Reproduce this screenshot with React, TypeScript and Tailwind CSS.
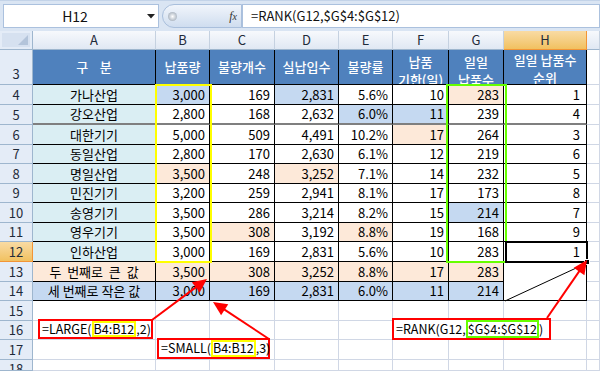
import React from 'react';

type Row = [number, string, string, string, string, string, string, string, string, string[]];

const FILL: Record<string, string> = {
  n: 'bg-white',
  b: 'bg-[#C5D9F1]',
  p: 'bg-[#FDE9D9]',
  a: 'bg-[#DAEEF3]',
};

const DATA: Row[] = [
  [4, '가나산업', '3,000', '169', '2,831', '5.6%', '10', '283', '1', ['b', 'n', 'b', 'n', 'n', 'p']],
  [5, '강오산업', '2,800', '168', '2,632', '6.0%', '11', '239', '4', ['n', 'n', 'n', 'b', 'b', 'n']],
  [6, '대한기기', '5,000', '509', '4,491', '10.2%', '17', '264', '3', ['n', 'n', 'n', 'n', 'p', 'n']],
  [7, '동일산업', '2,800', '170', '2,630', '6.1%', '12', '219', '6', ['n', 'n', 'n', 'n', 'n', 'n']],
  [8, '명일산업', '3,500', '248', '3,252', '7.1%', '14', '232', '5', ['p', 'n', 'p', 'n', 'n', 'n']],
  [9, '민진기기', '3,200', '259', '2,941', '8.1%', '17', '173', '8', ['n', 'n', 'n', 'n', 'n', 'n']],
  [10, '송영기기', '3,500', '286', '3,214', '8.2%', '15', '214', '7', ['n', 'n', 'n', 'n', 'n', 'b']],
  [11, '영우기기', '3,500', '308', '3,192', '8.8%', '19', '168', '9', ['n', 'p', 'n', 'p', 'n', 'n']],
  [12, '인하산업', '3,000', '169', '2,831', '5.6%', '10', '283', '1', ['n', 'n', 'n', 'n', 'n', 'n']],
];

const rowHeadBase = 'border-r border-b flex items-center justify-center text-[13px] text-[#1f2b3a] overflow-hidden';
const rowHeadNormal = 'bg-[#E4ECF7] border-[#9EB6CE]';
const rowHeadActive = 'bg-linear-to-b from-[#F9DBA3] to-[#F1C15F] border-[#F29536]';

function RowHead({ n, active = false, bottom = false, top = false }: { n: number; active?: boolean; bottom?: boolean; top?: boolean }) {
  return (
    <div className={`${rowHeadBase} ${active ? rowHeadActive : rowHeadNormal} ${bottom ? 'items-end pb-[1px]' : ''} ${top ? 'items-start pt-[1px] leading-[16px]' : ''}`}>
      {n}
    </div>
  );
}

function Grid() {
  return <div className="border-r border-b border-[#D0D7E5] bg-white" />;
}

function Arrow({ x1, y1, x2, y2 }: { x1: number; y1: number; x2: number; y2: number }) {
  const dx = x2 - x1;
  const dy = y2 - y1;
  const len = Math.hypot(dx, dy);
  const ux = dx / len;
  const uy = dy / len;
  const L = 14;
  const W = 6.5;
  const bx = x2 - ux * L;
  const by = y2 - uy * L;
  const nx = -uy;
  const ny = ux;
  const pts = `${x2},${y2} ${bx + nx * W},${by + ny * W} ${bx - nx * W},${by - ny * W}`;
  return (
    <g>
      <line x1={x1} y1={y1} x2={bx + ux * 2} y2={by + uy * 2} stroke="#FF0000" strokeWidth={2} />
      <polygon points={pts} fill="#FF0000" />
    </g>
  );
}

export default function App() {
  const F = "font-['Noto_Sans_CJK_KR','Noto_Sans',sans-serif]";
  const tbl = 'border-r border-b border-black flex items-center text-[13px] text-black overflow-hidden whitespace-nowrap';
  const hdr = 'bg-[#4F81BD] border-r border-b border-black flex justify-center text-[13px] text-white font-medium overflow-hidden whitespace-nowrap';
  const colHead = 'bg-linear-to-b from-[#F7F9FC] to-[#E0E8F3] border-r border-b border-r-[#C5D1E0] border-b-[#9EB6CE] flex items-center justify-center text-[13px] text-[#1f2b3a]';
  const colHeadActive = 'bg-linear-to-b from-[#F9DBA3] to-[#F1C15F] border-r border-b border-[#F29536] flex items-center justify-center text-[13px] text-[#1f2b3a]';

  return (
    <div className={`relative w-[600px] h-[371px] overflow-hidden bg-white ${F}`}>
      {/* formula bar */}
      <div className="h-[31px] bg-[#DAE5F3] flex pt-[3px] pl-[3px] pb-[3px] border-t border-[#C3D3E8]">
        <div className="w-[156px] h-[24px] bg-white border border-[#ABC1DE] flex items-center">
          <div className="flex-1 text-center text-[14px] text-[#111] pl-[2px]">H12</div>
          <div className="w-[14px] flex items-center justify-center">
            <svg width="8" height="5" viewBox="0 0 8 5"><polygon points="0,0 8,0 4,4.5" fill="#222" /></svg>
          </div>
        </div>
        <div className="ml-[3px] w-[80px] h-[24px] rounded-l-[12px] bg-linear-to-b from-[#F1F5FB] to-[#CFDDEF] border border-[#A9BFDC] flex items-center justify-between pl-[5px] pr-[4px]">
          <div className="w-[9px] h-[9px] rounded-full bg-radial from-[#FFFFFF] to-[#8E9BAA]" />
          <span className="text-[12px] italic font-['Liberation_Serif',serif] text-[#333]">f<span className="text-[10px]">x</span></span>
        </div>
        <div className="flex-1 h-[24px] bg-white border border-[#ABC1DE] flex items-center pl-[8px] text-[13px] text-[#111]">
          =RANK(G12,$G$4:$G$12)
        </div>
      </div>

      {/* sheet grid */}
      <div className="grid grid-cols-[33px_123px_54px_65px_64px_54px_56px_55px_83px_13px] grid-rows-[19px_35px_20px_20px_20px_19px_20px_19px_20px_19px_20px_20px_19px_20px_19px_20px_11px]">
        {/* column headers */}
        <div className="bg-[#E4ECF7] border-r border-b border-[#9EB6CE] p-[2px]">
          <div className="w-full h-full bg-[#D6E1F0] flex items-end justify-end p-[2px]">
            <svg width="10" height="10" viewBox="0 0 10 10"><polygon points="10,0 10,10 0,10" fill="#B3C4DA" /></svg>
          </div>
        </div>
        {['A', 'B', 'C', 'D', 'E', 'F', 'G'].map((c) => (
          <div key={c} className={colHead}>{c}</div>
        ))}
        <div className={colHeadActive}>H</div>
        <div className={colHead} />

        {/* row 3 header */}
        <RowHead n={3} bottom />
        <div className={`${hdr} items-center`}>구&nbsp;&nbsp;&nbsp;&nbsp;분</div>
        <div className={`${hdr} items-center`}>납품량</div>
        <div className={`${hdr} items-center`}>불량개수</div>
        <div className={`${hdr} items-center`}>실납입수</div>
        <div className={`${hdr} items-center`}>불량률</div>
        <div className={`${hdr} flex-col items-center justify-start pt-[3px] leading-[18px]`}><span>납품</span><span>기한(일)</span></div>
        <div className={`${hdr} flex-col items-center justify-start pt-[3px] leading-[18px]`}><span>일일</span><span>납품수</span></div>
        <div className={`${hdr} flex-col items-center justify-start pt-[1px] leading-[18px]`}><span>일일 납품수</span><span>순위</span></div>
        <Grid />

        {/* data rows */}
        {DATA.map((r) => {
          const [n, name, b, c, d, e, f, g, h, fills] = r;
          const thick = n === 5 ? 'border-b-2 border-b-[#7F7F7F]' : '';
          const vals = [b, c, d, e, f, g];
          return (
            <React.Fragment key={n}>
              <RowHead n={n} active={n === 12} />
              <div className={`${tbl} ${thick} bg-[#DAEEF3] justify-center`}>{name}</div>
              {vals.map((v, i) => (
                <div key={i} className={`${tbl} ${thick} ${FILL[fills[i]]} justify-end pr-[4px]`}>{v}</div>
              ))}
              <div className={`${tbl} ${thick} bg-white justify-end pr-[6px]`}>{h}</div>
              <Grid />
            </React.Fragment>
          );
        })}

        {/* row 13 */}
        <RowHead n={13} />
        <div className={`${tbl} bg-[#FDE9D9] justify-center`}>두&nbsp; 번째로&nbsp; 큰&nbsp; 값</div>
        {['3,500', '308', '3,252', '8.8%', '17', '283'].map((v, i) => (
          <div key={i} className={`${tbl} bg-[#FDE9D9] justify-end pr-[4px]`}>{v}</div>
        ))}
        <div className="row-span-2 border-r border-b border-black bg-white" />
        <Grid />

        {/* row 14 */}
        <RowHead n={14} />
        <div className={`${tbl} bg-[#C5D9F1] justify-center`}>세 번째로 작은 값</div>
        {['3,000', '169', '2,831', '6.0%', '11', '214'].map((v, i) => (
          <div key={i} className={`${tbl} bg-[#C5D9F1] justify-end pr-[4px]`}>{v}</div>
        ))}
        <Grid />

        {/* rows 15-18 */}
        {[15, 16, 17, 18].map((n) => (
          <React.Fragment key={n}>
            <RowHead n={n} top={n === 18} />
            <Grid /><Grid /><Grid /><Grid /><Grid /><Grid /><Grid /><Grid /><Grid />
          </React.Fragment>
        ))}
      </div>

      {/* range highlight overlays */}
      <div className="absolute left-[155px] top-[84px] w-[57px] h-[179px] border-2 border-[#FFFF00] pointer-events-none" />
      <div className="absolute left-[446px] top-[84px] w-[61px] h-[179px] border-2 border-[#66FF00] pointer-events-none" />
      <div className="absolute left-[505px] top-[241px] w-[83px] h-[22px] border-2 border-black pointer-events-none" />
      <div className="absolute left-[584px] top-[259px] w-[6px] h-[6px] bg-black border border-white" />

      {/* annotation boxes */}
      <div className="absolute left-[38px] top-[319px] w-[115px] h-[20px] border-2 border-[#FF0000] bg-white flex items-stretch pl-[2px] text-[12.5px] text-black leading-none whitespace-nowrap">
        <span className="flex items-center">=LARGE(</span>
        <span className="flex items-center border-2 border-[#FFFF00]">B4:B12</span>
        <span className="flex items-center">,2)</span>
      </div>
      <div className="absolute left-[157px] top-[338px] w-[113px] h-[21px] border-2 border-[#FF0000] bg-white flex items-stretch pl-[2px] text-[12.5px] text-black leading-none whitespace-nowrap">
        <span className="flex items-center">=SMALL(</span>
        <span className="flex items-center border-2 border-[#FFFF00]">B4:B12</span>
        <span className="flex items-center">,3)</span>
      </div>
      <div className="absolute left-[392px] top-[318px] w-[159px] h-[22px] border-2 border-[#FF0000] bg-white flex items-stretch pl-[2px] text-[12.5px] text-black leading-none whitespace-nowrap">
        <span className="flex items-center">=RANK(G12,</span>
        <span className="flex items-center border-2 border-[#66FF00]">$G$4:$G$12</span>
        <span className="flex items-center">)</span>
      </div>

      {/* arrows & diagonal */}
      <svg className="absolute left-0 top-0 pointer-events-none" width="600" height="371" viewBox="0 0 600 371">
        <line x1="505" y1="301" x2="587" y2="263" stroke="#000" strokeWidth="1" />
        <Arrow x1={152} y1={320} x2={207} y2={279} />
        <Arrow x1={269} y1={339} x2={213} y2={302} />
        <Arrow x1={547} y1={318} x2={587} y2={260} />
      </svg>
    </div>
  );
}
